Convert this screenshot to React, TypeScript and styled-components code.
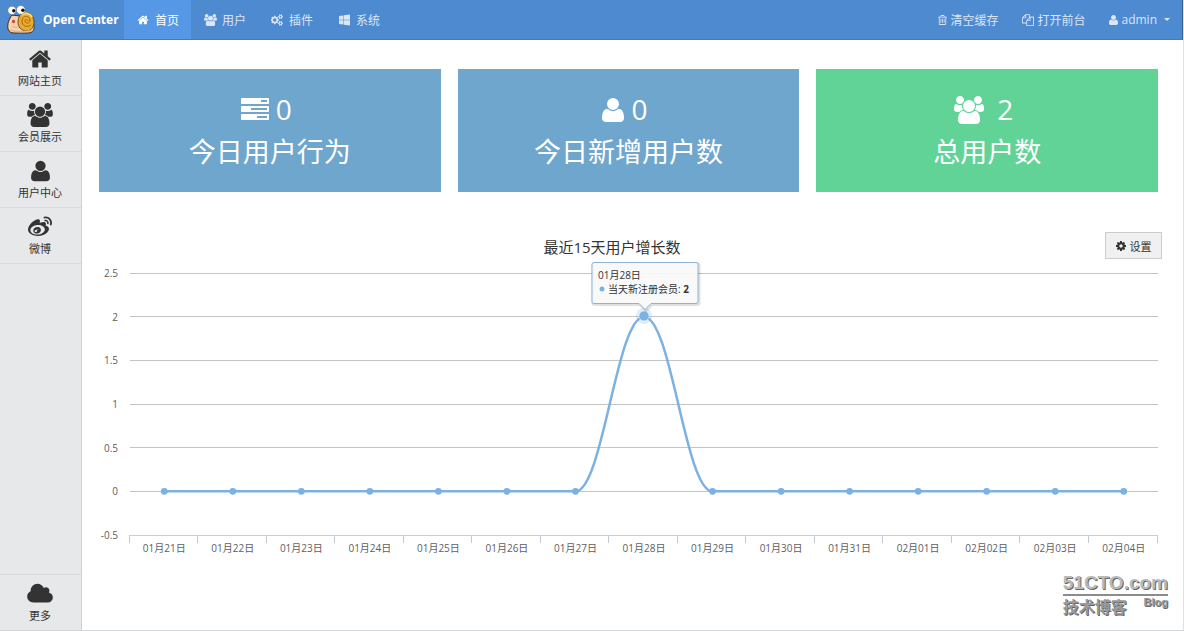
import React, { useLayoutEffect, useRef, useState } from "react";
import styled, { createGlobalStyle } from "styled-components";
import { FaWeibo } from "react-icons/fa";

const GlobalStyle = createGlobalStyle`
  *, *::before, *::after { box-sizing: border-box; }
  body {
    margin: 0;
    background: #fff;
    color: #333;
    font-family: "Open Sans", "Noto Sans CJK SC", sans-serif;
    font-size: 12px;
  }
`;

const Page = styled.div`
  display: flex;
  flex-direction: column;
  min-height: 100vh;
  border-right: 1px solid #dfe1e3;
  border-bottom: 1px solid #d3d5d7;
`;

const Header = styled.header`
  display: flex;
  align-items: stretch;
  height: 40px;
  background: #4e8ad0;
  border-bottom: 1px solid #4379bd;
  border-right: 1px solid #3a5f8f;
`;

const Brand = styled.a`
  display: flex;
  align-items: center;
  gap: 7px;
  width: 124px;
  padding-left: 7px;
  color: #fff;
  font-weight: 700;
  text-decoration: none;
  white-space: nowrap;
`;

const Nav = styled.nav<{ $end?: boolean }>`
  display: flex;
  margin-left: ${(p) => (p.$end ? "auto" : "0")};
`;

const NavLink = styled.a<{ $active?: boolean; $gap: number }>`
  display: flex;
  align-items: center;
  gap: ${(p) => p.$gap}px;
  padding: 0 12px;
  color: ${(p) => (p.$active ? "#fff" : "#dbe6f4")};
  background: ${(p) => (p.$active ? "#5798e6" : "transparent")};
  text-decoration: none;
  white-space: nowrap;
`;

const IconBox = styled.span<{ $width: number }>`
  display: flex;
  justify-content: center;
  width: ${(p) => p.$width}px;
`;

const Caret = styled.span`
  margin-left: 4px;
  border: 3px solid transparent;
  border-top-color: currentColor;
  border-bottom-width: 0;
`;

const Body = styled.div`
  display: flex;
  flex: 1;
`;

const Sidebar = styled.nav`
  display: flex;
  flex-direction: column;
  flex: none;
  width: 82px;
  background: #e6e8ea;
  border-right: 1px solid #cfd1d4;
`;

const SideLink = styled.a<{ $last?: boolean }>`
  display: flex;
  flex-direction: column;
  align-items: center;
  gap: 2px;
  height: 56px;
  padding-top: 7px;
  padding-right: 1px;
  color: #333;
  font-size: 11px;
  line-height: 16px;
  text-decoration: none;
  border: 0 solid #d8dadc;
  border-bottom-width: ${(p) => (p.$last ? 0 : 1)}px;
  border-top-width: ${(p) => (p.$last ? 1 : 0)}px;
  margin-top: ${(p) => (p.$last ? "auto" : "0")};

  svg { flex: none; }
`;

const Main = styled.main`
  flex: 1;
  min-width: 0;
  padding: 29px 25px 16px 17px;
`;

const Cards = styled.section`
  display: grid;
  grid-template-columns: repeat(3, 1fr);
  gap: 17px;
`;

const Card = styled.article<{ $color: string }>`
  display: flex;
  flex-direction: column;
  align-items: center;
  height: 123px;
  padding-top: 20px;
  background: ${(p) => p.$color};
  color: #fff;
`;

const CardValue = styled.div<{ $gap: number }>`
  display: flex;
  align-items: center;
  gap: ${(p) => p.$gap}px;
  padding-right: 7px;
  font-size: 28px;
  line-height: 41px;
`;

const CardLabel = styled.div`
  font-size: 27px;
  line-height: 43px;
`;

const ChartHead = styled.div`
  display: flex;
  align-items: center;
  height: 27px;
  margin: 40px -4px 0 20px;
`;

const ChartTitle = styled.h2`
  flex: 1;
  margin: 0;
  padding-top: 4px;
  font-size: 15px;
  font-weight: 400;
  line-height: 23px;
  text-align: center;
`;

const SettingsButton = styled.button`
  display: flex;
  align-items: center;
  justify-content: center;
  gap: 4px;
  width: 57px;
  height: 27px;
  padding: 0;
  border: 1px solid #ccc;
  background: #f0f0f0;
  color: #333;
  font: inherit;
  font-size: 11px;
`;

const ChartArea = styled.div`
  height: 300px;
  font-size: 10px;

  svg { display: block; overflow: visible; }
`;

const Watermark = styled.aside`
  position: absolute;
  right: 16px;
  bottom: 13px;
  color: #b9b9b9;
  font-weight: 700;
  text-shadow: 1px 1px 0 #666;
`;

const WatermarkName = styled.div`
  border-bottom: 2px solid #8c8c8c;
  font-family: "Liberation Sans", sans-serif;
  font-size: 19px;
  line-height: 22px;
  white-space: nowrap;
`;

const WatermarkSub = styled.div`
  display: flex;
  justify-content: space-between;
  font-size: 16px;
  line-height: 22px;
  color: #9a9a9a;

  small {
    font-family: "Liberation Sans", sans-serif;
    font-size: 11px;
    line-height: 13px;
  }
`;

const slot = (y: number) =>
  `M1792 ${y}v256q0 26-19 45t-45 19h-1664q-26 0-45-19t-19-45v-256q0-26 19-45t45-19h1664q26 0 45 19t19 45z`;

const icons = {
  home: {
    box: "0 0 1792 1792",
    d: "M1472 992v480q0 26-19 45t-45 19h-384v-384h-256v384h-384q-26 0-45-19t-19-45v-480q0-1 .5-3t.5-3l575-474 575 474q1 2 1 6zm223-69l-62 74q-8 9-21 11h-3q-13 0-21-7l-692-577-692 577q-12 8-24 7-13-2-21-11l-62-74q-8-10-7-23.5t11-21.5l719-599q32-26 76-26t76 26l244 204v-195q0-14 9-23t23-9h192q14 0 23 9t9 23v408l219 182q10 8 11 21.5t-7 23.5z",
  },
  user: {
    box: "192 0 1408 1792",
    d: "M1600 1405q0 120-73 189.5t-194 69.5h-874q-121 0-194-69.5t-73-189.5q0-53 3.5-103.5t14-109 26.5-108.5 43-97.5 62-81 85.5-53.5 111.5-20q9 0 42 21.5t74.5 48 108 48 133.5 21.5 133.5-21.5 108-48 74.5-48 42-21.5q61 0 111.5 20t85.5 53.5 62 81 43 97.5 26.5 108.5 14 109 3.5 103.5zm-320-893q0 159-112.5 271.5t-271.5 112.5-271.5-112.5-112.5-271.5 112.5-271.5 271.5-112.5 271.5 112.5 112.5 271.5z",
  },
  users: {
    box: "-64 0 1920 1792",
    d: "M529 896q-162 5-265 128h-134q-82 0-138-40.5t-56-118.5q0-353 124-353 6 0 43.5 21t97.5 42.5 119 21.5q67 0 133-23-5 37-5 66 0 139 81 256zm1071 637q0 120-73 189.5t-194 69.5h-874q-121 0-194-69.5t-73-189.5q0-53 3.5-103.5t14-109 26.5-108.5 43-97.5 62-81 85.5-53.5 111.5-20q10 0 43 21.5t73 48 107 48 135 21.5 135-21.5 107-48 73-48 43-21.5q61 0 111.5 20t85.5 53.5 62 81 43 97.5 26.5 108.5 14 109 3.5 103.5zm-1024-1277q0 106-75 181t-181 75-181-75-75-181 75-181 181-75 181 75 75 181zm704 384q0 159-112.5 271.5t-271.5 112.5-271.5-112.5-112.5-271.5 112.5-271.5 271.5-112.5 271.5 112.5 112.5 271.5zm576 225q0 78-56 118.5t-138 40.5h-134q-103-123-265-128 81-117 81-256 0-29-5-66 66 23 133 23 59 0 119-21.5t97.5-42.5 43.5-21q124 0 124 353zm-128-609q0 106-75 181t-181 75-181-75-75-181 75-181 181-75 181 75 75 181z",
  },
  cogs: {
    box: "0 0 1856 1792",
    d: "M832 896q0-106-75-181t-181-75-181 75-75 181 75 181 181 75 181-75 75-181zm768 512q0-52-38-90t-90-38-90 38-38 90q0 53 37.5 90.5t90.5 37.5 90.5-37.5 37.5-90.5zm0-1024q0-52-38-90t-90-38-90 38-38 90q0 53 37.5 90.5t90.5 37.5 90.5-37.5 37.5-90.5zm-384 421v185q0 10-7 19.5t-16 10.5l-155 24q-11 35-32 76 34 48 90 115 7 11 7 20 0 12-7 19-23 30-82.5 89.5t-78.5 59.5q-11 0-21-7l-115-90q-37 19-77 31-11 108-23 155-7 24-30 24h-186q-11 0-20-7.5t-10-17.5l-23-153q-34-10-75-31l-118 89q-7 7-20 7-11 0-21-8-144-133-144-160 0-9 7-19 10-14 41-53t47-61q-23-44-35-82l-152-24q-10-1-17-9.5t-7-19.5v-185q0-10 7-19.5t16-10.5l155-24q11-35 32-76-34-48-90-115-7-11-7-20 0-12 7-20 22-30 82-89t79-59q11 0 21 7l115 90q34-18 77-32 11-108 23-154 7-24 30-24h186q11 0 20 7.5t10 17.5l23 153q34 10 75 31l118-89q8-7 20-7 11 0 21 8 144 133 144 160 0 8-7 19-12 16-42 54t-45 60q23 48 34 82l152 23q10 2 17 10.5t7 19.5zm640 533v140q0 16-149 31-12 27-30 52 51 113 51 138 0 4-4 7-122 71-124 71-8 0-46-47t-52-68q-20 2-30 2t-30-2q-14 21-52 68t-46 47q-2 0-124-71-4-3-4-7 0-25 51-138-18-25-30-52-149-15-149-31v-140q0-16 149-31 13-29 30-52-51-113-51-138 0-4 4-7 4-2 35-20t59-34 30-16q8 0 46 46.5t52 67.5q20-2 30-2t30 2q51-71 92-112l6-2q4 0 124 70 4 3 4 7 0 25-51 138 17 23 30 52 149 15 149 31zm0-1024v140q0 16-149 31-12 27-30 52 51 113 51 138 0 4-4 7-122 71-124 71-8 0-46-47t-52-68q-20 2-30 2t-30-2q-14 21-52 68t-46 47q-2 0-124-71-4-3-4-7 0-25 51-138-18-25-30-52-149-15-149-31v-140q0-16 149-31 13-29 30-52-51-113-51-138 0-4 4-7 4-2 35-20t59-34 30-16q8 0 46 46.5t52 67.5q20-2 30-2t30 2q51-71 92-112l6-2q4 0 124 70 4 3 4 7 0 25-51 138 17 23 30 52 149 15 149 31z",
  },
  cog: {
    box: "128 0 1536 1792",
    d: "M1152 896q0-106-75-181t-181-75-181 75-75 181 75 181 181 75 181-75 75-181zm512-109v222q0 12-8 23t-20 13l-185 28q-19 54-39 91 35 50 107 138 10 12 10 25t-9 23q-27 37-99 108t-94 71q-12 0-26-9l-138-108q-44 23-91 38-16 136-29 186-7 28-36 28h-222q-14 0-24.5-8.5t-11.5-21.5l-28-184q-49-16-90-37l-141 107q-10 9-25 9-14 0-25-11-126-114-165-168-7-10-7-23 0-12 8-23 15-21 51-66.5t54-70.5q-27-50-41-99l-183-27q-13-2-21-12.5t-8-23.5v-222q0-12 8-23t19-13l186-28q14-46 39-92-40-57-107-138-10-12-10-24 0-10 9-23 26-36 98.5-107.5t94.5-71.5q13 0 26 10l138 107q44-23 91-38 16-136 29-186 7-28 36-28h222q14 0 24.5 8.5t11.5 21.5l28 184q49 16 90 37l142-107q9-9 24-9 13 0 25 10 129 119 165 170 7 8 7 22 0 12-8 23-15 21-51 66.5t-54 70.5q26 50 41 98l183 28q13 2 21 12.5t8 23.5z",
  },
  windows: {
    box: "64 64 1664 1792",
    d: "M746 1006v651l-682-94v-557h682zm0-743v659h-682v-565zm982 743v786l-907-125v-661h907zm0-878v794h-907v-669z",
  },
  trash: {
    box: "192 0 1408 1792",
    d: "M704 736v576q0 14-9 23t-23 9h-64q-14 0-23-9t-9-23v-576q0-14 9-23t23-9h64q14 0 23 9t9 23zm256 0v576q0 14-9 23t-23 9h-64q-14 0-23-9t-9-23v-576q0-14 9-23t23-9h64q14 0 23 9t9 23zm256 0v576q0 14-9 23t-23 9h-64q-14 0-23-9t-9-23v-576q0-14 9-23t23-9h64q14 0 23 9t9 23zm128 724v-948h-896v948q0 22 7 40.5t14.5 27 10.5 8.5h832q3 0 10.5-8.5t14.5-27 7-40.5zm-672-1076h448l-48-117q-7-9-17-11h-317q-10 2-17 11zm928 32v64q0 14-9 23t-23 9h-96v948q0 83-47 143.5t-113 60.5h-832q-66 0-113-58.5t-47-141.5v-952h-96q-14 0-23-9t-9-23v-64q0-14 9-23t23-9h309l70-167q15-37 54-63t79-26h320q40 0 79 26t54 63l70 167h309q14 0 23 9t9 23z",
  },
  files: {
    box: "0 0 1792 1792",
    d: "M1696 384q40 0 68 28t28 68v1216q0 40-28 68t-68 28h-960q-40 0-68-28t-28-68v-288h-544q-40 0-68-28t-28-68v-672q0-40 20-88t48-76l408-408q28-28 76-48t88-20h416q40 0 68 28t28 68v328q68-40 128-40h416zm-544 213l-299 299h299v-299zm-640-384l-299 299h299v-299zm196 647l316-316v-416h-384v416q0 40-28 68t-68 28h-416v640h512v-256q0-40 20-88t48-76zm956 804v-1152h-384v416q0 40-28 68t-68 28h-416v640h896z",
  },
  cloud: {
    box: "-64 0 1920 1792",
    d: "M1856 1152q0 159-112.5 271.5t-271.5 112.5h-1088q-185 0-316.5-131.5t-131.5-316.5q0-132 71-241.5t187-163.5q-2-28-2-43 0-212 150-362t362-150q158 0 286.5 88t187.5 230q70-62 166-62 106 0 181 75t75 181q0 75-41 138 129 30 213 134.5t84 239.5z",
  },
  tasks: {
    box: "0 0 1792 1792",
    d: `${slot(192)}M1280 384h384v-128h-384z${slot(704)}M640 896h1024v-128h-1024z${slot(1216)}M1024 1408h640v-128h-640z`,
  },
};

type IconName = keyof typeof icons;

function Icon({ name, size }: { name: IconName; size: number }) {
  const { box, d } = icons[name];
  const [, , w, h] = box.split(" ").map(Number);
  return (
    <svg
      viewBox={box}
      width={Math.round((size * w) / h)}
      height={size}
      fill="currentColor"
      fillRule={name === "tasks" ? "evenodd" : "nonzero"}
      aria-hidden="true"
    >
      <path d={d} />
    </svg>
  );
}

function SnailLogo() {
  return (
    <svg width="29" height="30" viewBox="0 0 29 30" aria-hidden="true">
      <path
        d="M5 10C2 14 0 19 1 24c1 3 3 4 6 4h14c5 0 7-4 6-8L13 11z"
        fill="#f8d3b0"
        stroke="#3f2c18"
        strokeWidth="1"
      />
      <path
        d="M14 9c6-4 13 0 13 8 0 5-3 9-7 9-6 0-9-4-9-9 0-3 1-6 3-8z"
        fill="#e9ab2e"
        stroke="#4f3512"
        strokeWidth="0.8"
      />
      <path d="M15 10c3-3 8-2 10 2" fill="none" stroke="#ffd873" strokeWidth="2" />
      <path
        d="M21 16c0-2-3-2-3 0 0 3 5 3 5-1 0-5-8-5-8 1 0 5 5 7 9 4"
        fill="none"
        stroke="#a8690f"
        strokeWidth="1"
      />
      <path d="M3 25c5 2 13 2 21 1" fill="none" stroke="#e9b48c" strokeWidth="1.6" />
      <ellipse cx="6.5" cy="16.5" rx="1.6" ry="1.7" fill="#c6493b" />
      <path d="M5 21c2 2 5 2 7 0" fill="none" stroke="#d19a70" strokeWidth="0.8" />
      <circle cx="5" cy="5.4" r="4.2" fill="#fff" stroke="#5a7290" strokeWidth="0.6" />
      <circle cx="13.8" cy="4.9" r="4.4" fill="#fff" stroke="#5a7290" strokeWidth="0.6" />
      <circle cx="6.8" cy="5.8" r="1.7" fill="#111" />
      <circle cx="15.9" cy="5.3" r="1.7" fill="#111" />
    </svg>
  );
}

const days = [
  "01月21日", "01月22日", "01月23日", "01月24日", "01月25日",
  "01月26日", "01月27日", "01月28日", "01月29日", "01月30日",
  "01月31日", "02月01日", "02月02日", "02月03日", "02月04日",
];
const counts = [0, 0, 0, 0, 0, 0, 0, 2, 0, 0, 0, 0, 0, 0, 0];
const levels = [2.5, 2, 1.5, 1, 0.5, 0, -0.5];

const PLOT_LEFT = 31;
const PLOT_TOP = 14;
const PLOT_HEIGHT = 262;

function GrowthChart() {
  const area = useRef<HTMLDivElement>(null);
  const [width, setWidth] = useState(1060);

  useLayoutEffect(() => {
    const el = area.current;
    if (!el) return;
    const measure = () => setWidth(el.clientWidth);
    measure();
    const observer = new ResizeObserver(measure);
    observer.observe(el);
    return () => observer.disconnect();
  }, []);

  const step = (width - PLOT_LEFT) / days.length;
  const xAt = (i: number) => PLOT_LEFT + step * (i + 0.5);
  const yAt = (v: number) => PLOT_TOP + ((2.5 - v) / 3) * PLOT_HEIGHT;
  const crisp = (n: number) => Math.floor(n) + 0.5;

  // Horizontal tangents at every point keep the spline from overshooting.
  const line = counts
    .map((v, i) =>
      i === 0
        ? `M${xAt(0)} ${yAt(v)}`
        : `C${xAt(i - 1) + step * 0.4} ${yAt(counts[i - 1])} ${xAt(i) - step * 0.4} ${yAt(v)} ${xAt(i)} ${yAt(v)}`
    )
    .join("");

  const peak = counts.indexOf(Math.max(...counts));
  const px = Math.floor(xAt(peak));
  const py = Math.floor(yAt(counts[peak]));

  return (
    <ChartArea ref={area}>
      <svg width={width} height="300" role="img" aria-label="最近15天用户增长数">
        {levels.map((v) => (
          <g key={v}>
            <line
              x1={PLOT_LEFT}
              x2={width}
              y1={crisp(yAt(v))}
              y2={crisp(yAt(v))}
              stroke={v === -0.5 ? "#c0d0e0" : "#c4c4c4"}
            />
            <text x={PLOT_LEFT - 12} y={yAt(v) + 4} textAnchor="end" fill="#606060">
              {v}
            </text>
          </g>
        ))}
        {[...days, ""].map((day, i) => (
          <g key={i}>
            <line
              x1={crisp(PLOT_LEFT + step * i - 1)}
              x2={crisp(PLOT_LEFT + step * i - 1)}
              y1={PLOT_TOP + PLOT_HEIGHT}
              y2={PLOT_TOP + PLOT_HEIGHT + 8}
              stroke="#c0cad4"
            />
            <text x={xAt(i)} y={PLOT_TOP + PLOT_HEIGHT + 17} textAnchor="middle" fill="#606060">
              {day}
            </text>
          </g>
        ))}
        <path d={line} fill="none" stroke="#7cb1e4" strokeWidth="2.5" />
        {counts.map((v, i) => (
          <circle key={i} cx={xAt(i)} cy={yAt(v)} r="3.4" fill="#7cb1e4" />
        ))}
        <circle cx={px} cy={py} r="8" fill="#7cb1e4" opacity="0.25" />
        <circle cx={px} cy={py} r="5" fill="#7cb1e4" stroke="#fff" strokeWidth="0.5" />
        <g transform={`translate(${px - 52} ${py - 54})`}>
          <path
            d="M2 .5h102q2 0 2 2v37q0 2-2 2h-45l-6 6-6-6h-45q-2 0-2-2v-37q0-2 2-2z"
            fill="none"
            stroke="#000"
            strokeOpacity="0.12"
            strokeWidth="3"
            transform="translate(1 1)"
          />
          <path
            d="M2 .5h102q2 0 2 2v37q0 2-2 2h-45l-6 6-6-6h-45q-2 0-2-2v-37q0-2 2-2z"
            fill="#f9f9f9"
            fillOpacity="0.92"
            stroke="#8fb4d4"
          />
          <text x="6" y="17" fill="#333">
            {days[peak]}
          </text>
          <circle cx="10" cy="27" r="2.5" fill="#7cb1e4" />
          <text x="16" y="31" fill="#333">
            当天新注册会员: <tspan fontWeight="700">{counts[peak]}</tspan>
          </text>
        </g>
      </svg>
    </ChartArea>
  );
}

const mainNav: { icon: IconName; label: string }[] = [
  { icon: "home", label: "首页" },
  { icon: "users", label: "用户" },
  { icon: "cogs", label: "插件" },
  { icon: "windows", label: "系统" },
];

export default function App() {
  return (
    <>
      <GlobalStyle />
      <Page>
        <Header>
          <Brand href="#">
            <SnailLogo />
            Open Center
          </Brand>
          <Nav>
            {mainNav.map((item, i) => (
              <NavLink key={item.label} href="#" $active={i === 0} $gap={5}>
                <IconBox $width={14}>
                  <Icon name={item.icon} size={12} />
                </IconBox>
                {item.label}
              </NavLink>
            ))}
          </Nav>
          <Nav $end>
            <NavLink href="#" $gap={3}>
              <Icon name="trash" size={12} />
              清空缓存
            </NavLink>
            <NavLink href="#" $gap={3}>
              <Icon name="files" size={12} />
              打开前台
            </NavLink>
            <NavLink href="#" $gap={3}>
              <Icon name="user" size={12} />
              admin
              <Caret />
            </NavLink>
          </Nav>
        </Header>
        <Body>
          <Sidebar>
            <SideLink href="#">
              <Icon name="home" size={24} />
              网站主页
            </SideLink>
            <SideLink href="#">
              <Icon name="users" size={24} />
              会员展示
            </SideLink>
            <SideLink href="#">
              <Icon name="user" size={24} />
              用户中心
            </SideLink>
            <SideLink href="#">
              <FaWeibo size={24} />
              微博
            </SideLink>
            <SideLink href="#" $last>
              <Icon name="cloud" size={24} />
              更多
            </SideLink>
          </Sidebar>
          <Main>
            <Cards>
              <Card $color="#6fa6cd">
                <CardValue $gap={7}>
                  <Icon name="tasks" size={28} />0
                </CardValue>
                <CardLabel>今日用户行为</CardLabel>
              </Card>
              <Card $color="#6fa6cd">
                <CardValue $gap={7}>
                  <Icon name="user" size={28} />0
                </CardValue>
                <CardLabel>今日新增用户数</CardLabel>
              </Card>
              <Card $color="#62d397">
                <CardValue $gap={13}>
                  <Icon name="users" size={28} />2
                </CardValue>
                <CardLabel>总用户数</CardLabel>
              </Card>
            </Cards>
            <ChartHead>
              <ChartTitle>最近15天用户增长数</ChartTitle>
              <SettingsButton type="button">
                <Icon name="cog" size={12} />
                设置
              </SettingsButton>
            </ChartHead>
            <GrowthChart />
          </Main>
        </Body>
        <Watermark>
          <WatermarkName>51CTO.com</WatermarkName>
          <WatermarkSub>
            技术博客 <small>Blog</small>
          </WatermarkSub>
        </Watermark>
      </Page>
    </>
  );
}
